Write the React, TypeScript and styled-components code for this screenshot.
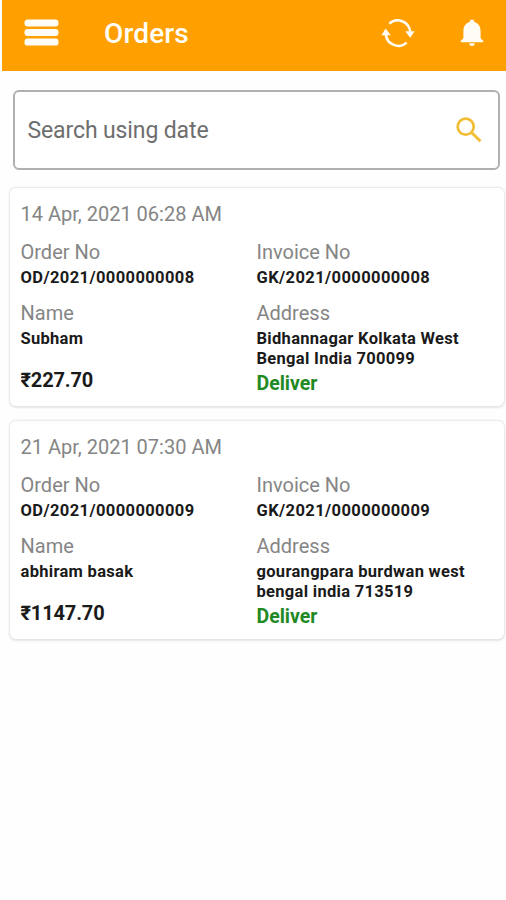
import React from 'react';
import styled, { createGlobalStyle } from 'styled-components';

const GlobalStyle = createGlobalStyle`
  * { box-sizing: border-box; }
  body {
    margin: 0;
    background: #fefefe;
    font-family: Roboto, "Liberation Sans", sans-serif;
  }
`;

const Screen = styled.div`
  width: 506px;
  min-height: 900px;
  padding-left: 2px;
  overflow: hidden;
`;

const AppBar = styled.header`
  display: flex;
  align-items: center;
  height: 71px;
  padding: 0 22px 5px 22px;
  background: #ffa000;
  border-bottom: 1px solid #f89c08;
  color: #fffdf6;
`;

const IconButton = styled.button`
  display: flex;
  padding: 0;
  border: 0;
  background: none;
  color: inherit;
`;

const Title = styled.h1`
  flex: 1;
  margin: 2px 0 0 45px;
  font-size: 28px;
  line-height: 32px;
  font-weight: 500;
  letter-spacing: 0.15px;
`;

const Actions = styled.div`
  display: flex;
  align-items: center;
  gap: 45px;
`;

const SearchBox = styled.div`
  display: flex;
  align-items: center;
  justify-content: space-between;
  width: 487px;
  height: 80px;
  margin: 19px 0 0 11px;
  padding: 0 16px 0 12.5px;
  border: 2px solid #b0b0b0;
  border-radius: 6px;
  background: #fff;
`;

const Placeholder = styled.span`
  margin-top: 2px;
  font-size: 23px;
  line-height: 28px;
  letter-spacing: -0.12px;
  color: #6e6e6e;
`;

const OrderList = styled.main`
  display: flex;
  flex-direction: column;
  gap: 15px;
  margin: 18px 2px 0 8px;
`;

const Card = styled.article`
  height: 218px;
  padding: 14px 11px 0 10.5px;
  border-radius: 6px;
  background: #fff;
  box-shadow: 0 0.5px 2px 1px rgba(0, 0, 0, 0.1);
`;

const OrderDate = styled.div`
  font-size: 20px;
  line-height: 24px;
  color: #858585;
`;

const Columns = styled.div`
  display: grid;
  grid-template-columns: 236px 1fr;
  margin-top: 14px;
`;

const Field = styled.div`
  height: 61px;
`;

const Label = styled.div`
  font-size: 20px;
  line-height: 24px;
  color: #858585;
`;

const Value = styled.div<{ $spacing?: number }>`
  margin-top: 4px;
  font-size: 16.5px;
  line-height: 20px;
  font-weight: 700;
  letter-spacing: ${(p) => p.$spacing ?? 0.3}px;
  white-space: pre-line;
  color: #1a1a1a;
`;

const Price = styled.div`
  margin-top: 6px;
  font-size: 20px;
  line-height: 24px;
  font-weight: 700;
  letter-spacing: -0.15px;
  color: #1a1a1a;
`;

const Status = styled.div`
  margin-top: 3px;
  font-size: 19.5px;
  line-height: 24px;
  font-weight: 700;
  color: #1f8a24;
`;

const MenuIcon = () => (
  <svg width="35" height="28" viewBox="0 0 35 28" fill="currentColor">
    <rect x="0.5" y="0.5" width="34" height="7" rx="3.2" />
    <rect x="0.5" y="10" width="34" height="7" rx="3.2" />
    <rect x="0.5" y="19.6" width="34" height="7" rx="3.2" />
  </svg>
);

const SyncIcon = () => (
  <svg width="34" height="30" viewBox="0 0 34 30" fill="none">
    <path d="M8.3 5.6A12.6 12.6 0 0 1 29.2 13.5" stroke="currentColor" strokeWidth="2.5" />
    <path d="M25.7 24.6A12.6 12.6 0 0 1 4.8 16.5" stroke="currentColor" strokeWidth="2.5" />
    <path d="M24.2 13.2h9.4l-4.4 6.6zM.4 17.2l4.2-6.8 5.2 6.8z" fill="currentColor" />
  </svg>
);

const BellIcon = () => (
  <svg width="24" height="28" viewBox="0 0 24 28" fill="currentColor">
    <path d="M12 .5a2.3 2.3 0 0 0-2.3 2.4C5.500 4.100 3.400 7.600 3.400 12v7.300L.8 21.800v1.500h22.400v-1.500l-2.600-2.500V12c0-4.400-2.100-7.900-6.300-9.100A2.300 2.300 0 0 0 12 .5zM9.300 24.300a2.700 2.700 0 0 0 5.400 0z" />
  </svg>
);

const SearchIcon = () => (
  <svg width="26" height="26" viewBox="0 0 26 26" fill="none" stroke="#f3bd35">
    <circle cx="9.700" cy="9.700" r="8" strokeWidth="2.700" />
    <path d="M15.500 15.500l9 8.800" strokeWidth="3" />
  </svg>
);

interface Order {
  date: string;
  orderNo: string;
  invoiceNo: string;
  name: string;
  address: string;
  price: string;
}

const orders: Order[] = [
  {
    date: '14 Apr, 2021 06:28 AM',
    orderNo: 'OD/2021/0000000008',
    invoiceNo: 'GK/2021/0000000008',
    name: 'Subham',
    address: 'Bidhannagar Kolkata West\nBengal India 700099',
    price: '₹227.70',
  },
  {
    date: '21 Apr, 2021 07:30 AM',
    orderNo: 'OD/2021/0000000009',
    invoiceNo: 'GK/2021/0000000009',
    name: 'abhiram basak',
    address: 'gourangpara burdwan west\nbengal india 713519',
    price: '₹1147.70',
  },
];

const OrderCard = ({ order }: { order: Order }) => (
  <Card>
    <OrderDate>{order.date}</OrderDate>
    <Columns>
      <div>
        <Field>
          <Label>Order No</Label>
          <Value $spacing={0.4}>{order.orderNo}</Value>
        </Field>
        <Field>
          <Label>Name</Label>
          <Value>{order.name}</Value>
        </Field>
        <Price>{order.price}</Price>
      </div>
      <div>
        <Field>
          <Label>Invoice No</Label>
          <Value $spacing={0.4}>{order.invoiceNo}</Value>
        </Field>
        <Label>Address</Label>
        <Value>{order.address}</Value>
        <Status>Deliver</Status>
      </div>
    </Columns>
  </Card>
);

export default function App() {
  return (
    <>
      <GlobalStyle />
      <Screen>
        <AppBar>
          <IconButton aria-label="Menu"><MenuIcon /></IconButton>
          <Title>Orders</Title>
          <Actions>
            <IconButton aria-label="Refresh"><SyncIcon /></IconButton>
            <IconButton aria-label="Notifications"><BellIcon /></IconButton>
          </Actions>
        </AppBar>
        <SearchBox>
          <Placeholder>Search using date</Placeholder>
          <SearchIcon />
        </SearchBox>
        <OrderList>
          {orders.map((order) => (
            <OrderCard key={order.orderNo} order={order} />
          ))}
        </OrderList>
      </Screen>
    </>
  );
}
